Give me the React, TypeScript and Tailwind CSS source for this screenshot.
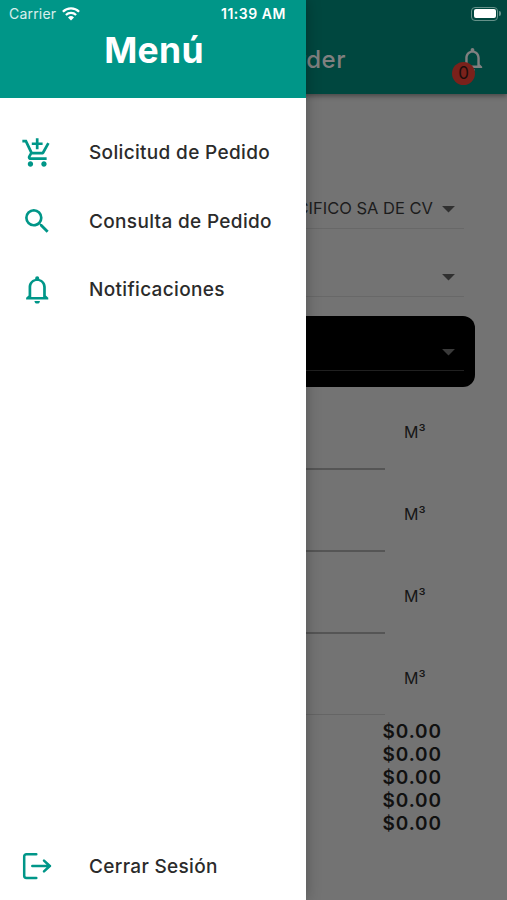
import {
  MdArrowDropDown,
  MdNotificationsNone,
  MdOutlineAddShoppingCart,
  MdSearch,
} from "react-icons/md";
import type { ReactNode } from "react";

function LogoutIcon() {
  return (
    <svg
      width="32"
      height="32"
      viewBox="0 0 32 32"
      fill="none"
      stroke="currentColor"
      strokeWidth="2.5"
      strokeLinecap="round"
      strokeLinejoin="round"
    >
      <path d="M15.3 4.2H5.4a2.2 2.2 0 0 0-2.2 2.2v19.4a2.2 2.2 0 0 0 2.2 2.2h9.9" />
      <path d="M11.3 16H29M23 10.6l5.8 5.4-5.8 5.4" />
    </svg>
  );
}

function BellIcon() {
  return (
    <svg width="32.4" height="32.4" viewBox="0 0 24 24" fill="currentColor">
      <path
        fillRule="evenodd"
        d="M12 2.4a1.5 1.5 0 0 0-1.5 1.5v.5C7.5 5.1 5.6 7.4 5.6 10.4v6.3L3.8 18.3v1.3h16.4v-1.3l-1.8-1.6v-6.3c0-3-1.9-5.3-4.9-6V3.9A1.5 1.5 0 0 0 12 2.4zM7.6 17.7v-7.1c0-2.7 1.7-4.6 4.4-4.6s4.4 1.9 4.4 4.6v7.1z"
      />
      <path d="M10 20.7h4a2 1.9 0 0 1-4 0z" />
    </svg>
  );
}

function WifiIcon() {
  return (
    <svg width="18" height="14" viewBox="0 0 18 14" fill="none" stroke="currentColor">
      <path d="M.9 4.7a11.6 11.6 0 0 1 16.2 0" strokeWidth="2.3" />
      <path d="M3.9 8a7.3 7.3 0 0 1 10.2 0" strokeWidth="2.2" />
      <path d="M9 13.6 6 10.5a4.3 4.3 0 0 1 6 0z" fill="currentColor" stroke="none" />
    </svg>
  );
}

function StatusBar() {
  return (
    <div className="absolute inset-x-0 top-0 z-20 flex h-[27px] items-center text-white">
      <span className="ml-[9px] w-[53px] text-[14px] tracking-[0.2px] text-white/85">Carrier</span>
      <WifiIcon />
      <span className="ml-[141px] text-[14px] font-semibold tracking-[0.5px] whitespace-nowrap">11:39 AM</span>
      <div className="mr-[6px] ml-auto flex items-center gap-px">
        <div className="h-[14px] w-[27px] rounded-[4px] border border-[#659189] p-[1.5px]">
          <div className="h-full rounded-[2px] bg-white" />
        </div>
        <div className="h-[5px] w-[2px] rounded-r-full bg-[#659189]" />
      </div>
    </div>
  );
}

function MenuItem({ icon, label }: { icon: ReactNode; label: string }) {
  return (
    <li className="flex h-[68.4px] items-center pl-[21px]">
      <span className="flex w-[68px] pb-[2px] text-[#009688]">{icon}</span>
      <span className="text-[19px] font-medium tracking-[0.33px] whitespace-nowrap text-[#2b2b2b]">{label}</span>
    </li>
  );
}

function Drawer() {
  return (
    <nav className="absolute inset-y-0 left-0 z-10 flex w-[306px] flex-col bg-white shadow-[0_0_14px_rgba(0,0,0,0.28)]">
      <div className="flex h-[98px] shrink-0 justify-center bg-[#009688] pt-[29px] pl-[2px]">
        <h1 className="text-[35.5px] leading-[44px] font-bold tracking-[0.3px] text-white">Menú</h1>
      </div>
      <ul className="mt-[21.5px] flex-1">
        <MenuItem icon={<MdOutlineAddShoppingCart size={32.4} />} label="Solicitud de Pedido" />
        <MenuItem icon={<MdSearch size={32.4} />} label="Consulta de Pedido" />
        <MenuItem icon={<BellIcon />} label="Notificaciones" />
      </ul>
      <ul className="-mb-px">
        <MenuItem icon={<LogoutIcon />} label="Cerrar Sesión" />
      </ul>
    </nav>
  );
}

function Header() {
  return (
    <header className="flex h-[94px] items-start justify-end bg-[#00473f] pt-[44px] pr-[20px] shadow-[0_2px_5px_rgba(0,0,0,0.4)]">
      <span className="mr-[112px] text-[24px] leading-[31px] font-medium tracking-[0.5px] text-[#808080]">Order</span>
      <div className="relative mt-px text-[#808080]">
        <MdNotificationsNone size={29} />
        <span className="absolute top-[17px] -left-[6px] flex size-[23px] items-center justify-center rounded-full bg-[#7a211b] text-[17px] text-[#1c0d0b]">
          0
        </span>
      </div>
    </header>
  );
}

function Quantity({ last }: { last?: boolean }) {
  return (
    <div className="flex h-[82px]">
      <div className={`w-[385px] ${last ? "mb-px border-b border-[#656565]" : "border-b-2 border-[#555555]"}`} />
      <span className="mt-[32px] ml-[19px] text-[16px] leading-6 text-[#161616]">M³</span>
    </div>
  );
}

const totals = ["$0.00", "$0.00", "$0.00", "$0.00", "$0.00"];

export default function App() {
  return (
    <div className="relative h-[900px] w-[507px] overflow-hidden bg-[#737373] font-[Inter,sans-serif]">
      <StatusBar />
      <Drawer />
      <Header />
      <main>
        <div className="mr-[43px] ml-8 flex h-[135px] items-end justify-end border-b border-[#686868] pb-[4px] text-[#1c1c1c]">
          <span className="text-[16.5px] leading-[31px] whitespace-nowrap">PACIFICO SA DE CV</span>
          <MdArrowDropDown className="text-[#303030]" size={31} />
        </div>
        <div className="mr-[43px] ml-8 flex h-[68px] items-end justify-end border-b border-[#686868] pb-[4px]">
          <MdArrowDropDown className="text-[#303030]" size={31} />
        </div>
        <div className="mt-[19px] mr-8 ml-8 h-[71px] rounded-[12px] bg-black pr-[11px]">
          <div className="flex h-[55px] items-end justify-end border-b border-[#202020] pb-[3px]">
            <MdArrowDropDown className="text-[#3a3a3a]" size={31} />
          </div>
        </div>
        <div className="pt-px">
          <Quantity />
          <Quantity />
          <Quantity />
          <Quantity last />
        </div>
        <div className="mt-[3.6px] flex flex-col items-end pr-[65px]">
          {totals.map((total, i) => (
            <span key={i} className="text-[19px] leading-[23.2px] font-semibold tracking-[0.9px] text-[#111111]">
              {total}
            </span>
          ))}
        </div>
      </main>
    </div>
  );
}
